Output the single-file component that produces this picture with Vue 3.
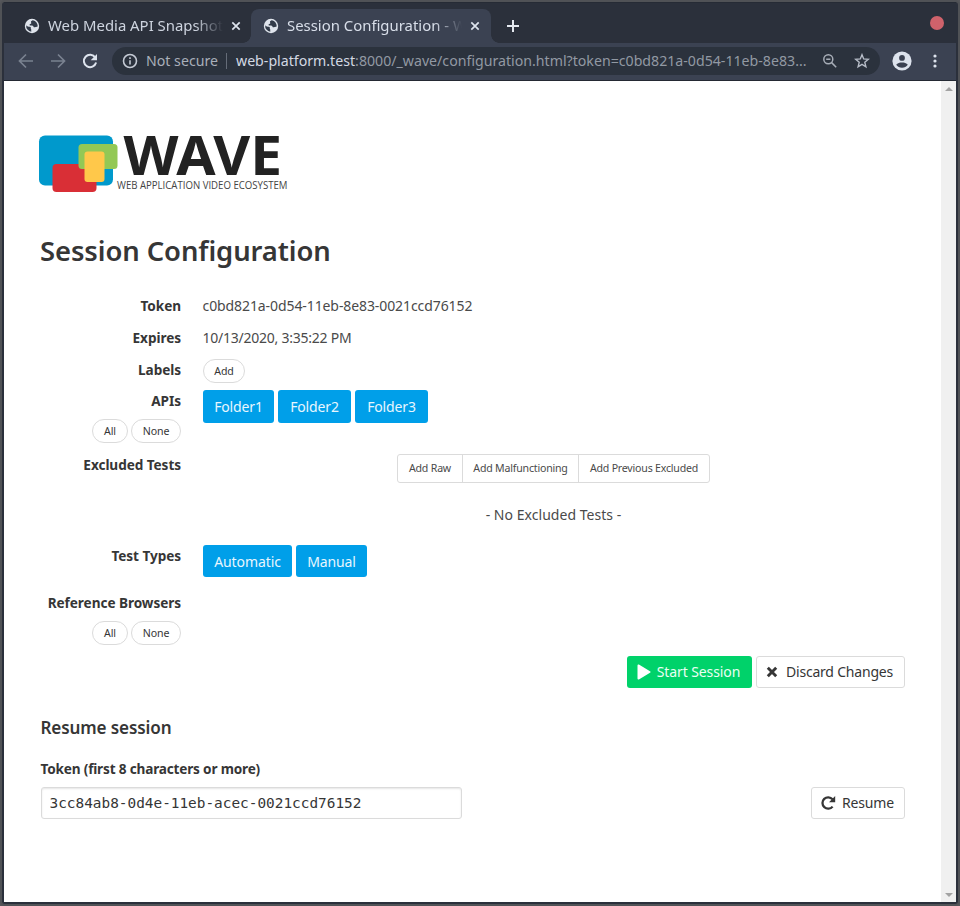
<script setup>
import { ref } from 'vue'

const tabs = [
  { title: 'Web Media API Snapshot', active: false },
  { title: 'Session Configuration - WAVE', active: true }
]
const folders = ['Folder1', 'Folder2', 'Folder3']
const excludeActions = ['Add Raw', 'Add Malfunctioning', 'Add Previous Excluded']
const testTypes = ['Automatic', 'Manual']
const resumeToken = ref('3cc84ab8-0d4e-11eb-acec-0021ccd76152')
</script>

<template>
  <div class="window">
    <header class="tabbar">
      <div v-for="tab in tabs" :key="tab.title" class="tab" :class="{ active: tab.active }">
        <svg class="globe" viewBox="0 0 16 16">
          <circle cx="8" cy="8" r="7.2" fill="#dfe4ec" />
          <path d="M8.9 2.2c-.9.6-1.9.7-2 1.5-.1.8.6.9.4 1.6-.3.9-1.6.6-1.8 1.5-.1.5.4.8.9.8 1.3-.1 2.6-.2 3 .9.2.7.8.9 1.4.8.9-.1 1.5-.7 2.7-.5A5.9 5.9 0 0 0 8.9 2.2zM2.2 7.2c.9 1 2.4 1.5 3.7 1.6.9.1 1.1.7.9 1.4-.2.7.6.9.5 1.7-.1.6-.2 1.2.1 1.9A5.9 5.9 0 0 1 2.2 7.2z" fill="#323b49" />
        </svg>
        <span class="tab-title">{{ tab.title }}</span>
        <svg class="tab-close" viewBox="0 0 10 10"><path d="M1.3 1.3 8.7 8.7M8.7 1.3 1.3 8.7" /></svg>
      </div>
      <svg class="plus" viewBox="0 0 12 12"><path d="M6 0v12M0 6h12" /></svg>
      <span class="close-dot"></span>
    </header>

    <nav class="toolbar">
      <svg class="nav dim" viewBox="0 0 16 16"><path d="M15 8H2M8 1.5 1.5 8 8 14.5" /></svg>
      <svg class="nav dim" viewBox="0 0 16 16"><path d="M1 8h13M8 1.5 14.5 8 8 14.5" /></svg>
      <svg class="nav reload" viewBox="0 0 16 16">
        <path d="M13.3 4.6A6.2 6.2 0 1 0 14.1 9.6" /><path class="solid" d="M15 1v6.3H8.7z" />
      </svg>
      <div class="omnibox">
        <svg class="info" viewBox="0 0 16 16">
          <circle cx="8" cy="8" r="6.5" /><path d="M8 7.2v4.3M8 4.3v1.8" />
        </svg>
        <span class="insecure">Not secure</span>
        <span class="divider"></span>
        <span class="url"><b>web-platform.test</b>:8000/_wave/configuration.html?token=c0bd821a-0d54-11eb-8e83...</span>
        <svg class="lens" viewBox="0 0 14 14"><circle cx="5.3" cy="5.3" r="4.5" /><path d="M8.6 8.6 13.2 13.2M3.2 5.3h4.2" /></svg>
        <svg class="star" viewBox="0 0 16 16"><path d="M8 1.7 9.7 5.9 14.3 6.3 10.8 9.3 11.9 13.8 8 11.4 4.1 13.8 5.2 9.3 1.7 6.3 6.3 5.9z" /></svg>
      </div>
      <svg class="avatar" viewBox="0 0 20 20">
        <circle cx="10" cy="10" r="9.6" fill="#dde3ed" />
        <circle cx="10" cy="6.9" r="2.9" fill="#3b4252" />
        <path d="M4.2 13.7c1.2-1.7 3.6-2.3 5.8-2.3s4.6.6 5.8 2.3c-1.3 1.9-3.4 3-5.8 3s-4.5-1.1-5.8-3z" fill="#3b4252" />
      </svg>
      <svg class="kebab" viewBox="0 0 4 14"><circle cx="2" cy="2" r="1.6" /><circle cx="2" cy="7" r="1.6" /><circle cx="2" cy="12" r="1.6" /></svg>
    </nav>

    <div class="viewport">
      <main class="page">
        <svg class="logo" viewBox="0 0 252 62">
          <rect x="0" y="1.5" width="74" height="50" rx="6" fill="#0099cc" />
          <rect x="13.5" y="30" width="44" height="28" rx="4" fill="#d92f36" />
          <rect x="39.5" y="10" width="39" height="25" rx="3.5" fill="#93c855" />
          <rect x="45.5" y="17.5" width="20" height="30.5" rx="3" fill="#ffc84a" />
          <text class="brand" x="84.5" y="40.5" textLength="158.5" lengthAdjust="spacingAndGlyphs">WAVE</text>
          <text class="tagline" x="78" y="54.7" textLength="170.5" lengthAdjust="spacingAndGlyphs">WEB APPLICATION VIDEO ECOSYSTEM</text>
        </svg>

        <h1>Session Configuration</h1>

        <section class="fields">
          <div class="row">
            <div class="label">Token</div>
            <div class="value token">c0bd821a-0d54-11eb-8e83-0021ccd76152</div>
          </div>
          <div class="row">
            <div class="label">Expires</div>
            <div class="value date">10/13/2020, 3:35:22 PM</div>
          </div>
          <div class="row">
            <div class="label">Labels</div>
            <div class="value buttons"><button class="pill add">Add</button></div>
          </div>
          <div class="row apis">
            <div class="label">APIs
              <div class="pills"><button class="pill all">All</button><button class="pill none">None</button></div>
            </div>
            <div class="value buttons">
              <button v-for="f in folders" :key="f" class="btn blue folder">{{ f }}</button>
            </div>
          </div>
          <div class="row excluded">
            <div class="label">Excluded Tests</div>
            <div class="value center">
              <div class="group"><button v-for="a in excludeActions" :key="a">{{ a }}</button></div>
              <p>- No Excluded Tests -</p>
            </div>
          </div>
          <div class="row types">
            <div class="label">Test Types</div>
            <div class="value buttons">
              <button v-for="t in testTypes" :key="t" class="btn blue" :class="t.toLowerCase()">{{ t }}</button>
            </div>
          </div>
          <div class="row browsers">
            <div class="label">Reference Browsers
              <div class="pills"><button class="pill all">All</button><button class="pill none">None</button></div>
            </div>
          </div>
        </section>

        <div class="actions">
          <button class="btn green">
            <svg class="play" viewBox="0 0 14 16"><path d="M.5 1.4C.5.5 1.2.2 1.9.6L13 7.2c.7.4.7 1.2 0 1.6L1.9 15.4c-.7.4-1.4.1-1.4-.8z" /></svg>Start Session
          </button>
          <button class="btn plain discard">
            <svg class="cross" viewBox="0 0 12 12"><path d="M1.8 1.8 10.2 10.2M10.2 1.8 1.8 10.2" /></svg>Discard Changes
          </button>
        </div>

        <h2>Resume session</h2>
        <label class="token-label" for="resume-token">Token (first 8 characters or more)</label>
        <div class="resume">
          <input id="resume-token" v-model="resumeToken" type="text" spellcheck="false" />
          <button class="btn plain again">
            <svg class="redo" viewBox="0 0 16 16"><path d="M12.5 4.3A5.7 5.7 0 1 0 12.6 11.6" /><path class="solid" d="M15.2 1v6.2H9z" /></svg>Resume
          </button>
        </div>
      </main>
      <aside class="scrollbar"><i class="up"></i><i class="down"></i></aside>
    </div>
  </div>
</template>

<style>
body { background: #55565a; }
</style>

<style scoped>
* { box-sizing: border-box; }
.window {
  width: 960px; height: 906px; display: flex; flex-direction: column;
  border: 2px solid #505256; border-radius: 5px; background: #2b303b;
  padding: 0 2px 2px; overflow: hidden; font-family: "Noto Sans", sans-serif;
}
svg { flex: none; display: block; }
button { font-family: inherit; margin: 0; white-space: nowrap; }

.tabbar { height: 41px; display: flex; align-items: flex-end; padding: 0 12px 0 7px; flex: none; border-top: 1px solid #262b35; }
.tab { height: 34px; width: 240px; display: flex; align-items: center; padding: 0 11px 0 12px; color: #ced4df; font-size: 14.9px; position: relative; }
.tab:not(.active) { padding: 0 10px 0 13px; }
.tab.active { background: #3b4252; border-radius: 8px 8px 0 0; color: #d8dee9; }
.tab.active::before, .tab.active::after { content: ""; position: absolute; bottom: 0; width: 8px; height: 8px; }
.tab.active::before { left: -8px; background: radial-gradient(circle at 0 0, transparent 7.5px, #3b4252 8px); }
.tab.active::after { right: -8px; background: radial-gradient(circle at 100% 0, transparent 7.5px, #3b4252 8px); }
.globe { width: 16px; height: 16px; margin-right: 8px; }
.tab-title {
  flex: 1; white-space: nowrap; overflow: hidden; line-height: 22px; margin-right: 8px; padding-bottom: 2px;
  -webkit-mask-image: linear-gradient(90deg, #000 calc(100% - 28px), transparent); mask-image: linear-gradient(90deg, #000 calc(100% - 28px), transparent);
}
.tab-close { width: 10px; height: 10px; fill: none; stroke: #dde3ed; stroke-width: 1.7; }
.plus { width: 12px; height: 12px; margin: 0 auto 11px 16px; stroke: #e5e9f0; stroke-width: 2; }
.close-dot { width: 14px; height: 14px; border-radius: 50%; background: #cf626b; margin-bottom: 13px; }

.toolbar { height: 38px; flex: none; background: #3b4252; border-bottom: 1px solid #242933; display: flex; align-items: center; padding: 0 19.5px 1px 14px; }
.nav { width: 16px; height: 16px; margin-right: 16px; fill: none; stroke: #dde3ed; stroke-width: 2; }
.nav.dim { stroke: #7a8290; stroke-width: 1.7; }
.nav.reload { margin-right: 14px; }
.solid { fill: currentColor; stroke: none; }
.reload { color: #dde3ed; }
.omnibox { width: 768px; height: 28px; border-radius: 14px; background: #2b323d; display: flex; align-items: center; padding: 0 10px; font-size: 14.17px; }
.info { width: 16px; height: 16px; fill: none; stroke: #c4cad4; stroke-width: 1.6; margin-right: 8px; }
.insecure, .url { padding-bottom: 2px; }
.insecure { color: #a9afb9; width: 80px; flex: none; white-space: nowrap; }
.divider { width: 1px; height: 16px; background: #656c78; margin-right: 9px; }
.url { color: #9299a3; white-space: nowrap; flex: 1; }
.url b { font-weight: 400; color: #d3d9e3; }
.lens { width: 14px; height: 14px; fill: none; stroke: #a7adb7; stroke-width: 1.5; margin-right: 17px; }
.star { width: 16px; height: 16px; fill: none; stroke: #b6bcc7; stroke-width: 1.4; stroke-linejoin: miter; }
.avatar { width: 20px; height: 20px; margin: 0 auto 0 12px; }
.kebab { width: 4px; height: 14px; fill: #dde3ed; }

.viewport { flex: 1; display: flex; background: #fff; min-height: 0; }
.page { flex: 1; padding: 53px 36px 0 37px; color: #363636; }
.scrollbar { width: 15px; background: #f0f0f0; display: flex; flex-direction: column; justify-content: space-between; align-items: center; padding: 6px 0 5px; }
.up, .down { width: 0; height: 0; border: 4px solid transparent; }
.up { border-top: 0; border-bottom-color: #a3a3a3; }
.down { border-bottom: 0; border-top-color: #a3a3a3; }

.logo { width: 252px; height: 62px; margin-left: -2px; overflow: visible; }
.brand { font: 700 54px "Noto Sans", sans-serif; fill: #222; }
.tagline { font: 400 10px "Open Sans", sans-serif; fill: #444; }

h1 { margin: 35px 0 0 -1px; font-size: 27.4px; line-height: 40px; font-weight: 600; letter-spacing: -.08px; }
.fields { margin-top: 19px; font-size: 14px; }
.row { display: grid; grid-template-columns: 140px 1fr; column-gap: 22px; height: 32px; line-height: 32px; }
.label { text-align: right; font-weight: 700; font-size: 13.6px; letter-spacing: -.06px; white-space: nowrap; display: flex; flex-direction: column; }
.value { color: #4a4a4a; }
.token { letter-spacing: -.09px; margin-left: -.5px; }
.date { letter-spacing: -.24px; margin-left: -.5px; }
.buttons { display: flex; gap: 4px; align-items: flex-start; padding-top: 5px; }
.pills { display: flex; justify-content: flex-end; gap: 3px; margin-top: 2px; }
.pill { height: 24px; border: 1px solid #dbdbdb; border-radius: 12px; background: #fff; color: #363636; font-size: 10.6px; letter-spacing: -.1px; padding: 0; }
.add { width: 42px; }
.all { width: 36px; }
.none { width: 50px; }
.row.apis { height: 63px; line-height: 30px; }
.apis .pills { margin-top: 3px; }
.apis .buttons { padding-top: 4px; }
.btn { height: 32px; border: 0; border-radius: 3px; font-size: 14px; padding: 0; display: flex; align-items: center; justify-content: center; letter-spacing: -.1px; }
.blue { background: #009fe9; color: #e8f6fe; }
.folder { width: 73px; height: 33px; letter-spacing: -.15px; }
.folder:first-child { width: 71px; }
.automatic { width: 89px; }
.manual { width: 71px; }
.excluded.row { height: 91px; }
.center { display: flex; flex-direction: column; align-items: center; padding: 5px 1px 0 0; }
.group { display: flex; height: 29px; border: 1px solid #dbdbdb; border-radius: 3px; }
.group button { background: none; border: 0; border-left: 1px solid #dbdbdb; color: #4a4a4a; font-size: 10.6px; letter-spacing: -.2px; padding: 0 0 2px; width: 116px; }
.group button:first-child { border-left: 0; width: 64px; }
.group button:last-child { width: 131px; }
.center p { margin: 16px 0 0; letter-spacing: .04px; }
.types.row { height: 47px; }
.browsers.row { height: 69px; }

.actions { display: flex; justify-content: flex-end; gap: 4px; }
.green { width: 125px; background: #00d26a; color: #eafff3; }
.actions .btn, .again { padding: 0 2px 1px 0; }
.play { width: 14px; height: 16px; fill: #fff; margin-right: 6px; }
.plain { border: 1px solid #dbdbdb; background: #fff; color: #363636; }
.discard { width: 149px; letter-spacing: -.2px; }
.cross { width: 12px; height: 12px; stroke: #363636; stroke-width: 2.9; margin-right: 8px; }
h2 { margin: 26px 0 0 -.5px; font-size: 17.1px; line-height: 28px; font-weight: 600; letter-spacing: -.13px; }
.token-label { display: block; margin: 17px 0 0 -.5px; line-height: 20px; font-size: 13.6px; font-weight: 700; letter-spacing: -.18px; }
.resume { display: flex; justify-content: space-between; margin-top: 8px; }
input { width: 421px; height: 32px; border: 1px solid #dbdbdb; border-radius: 3px; box-shadow: inset 0 1px 2px rgba(10, 10, 10, .1); font: 14.4px "DejaVu Sans Mono", monospace; color: #363636; padding: 0 7.5px; outline: 0; }
.again { width: 94px; letter-spacing: -.16px; }
.redo { width: 16px; height: 16px; fill: none; stroke: #363636; stroke-width: 2.3; color: #363636; margin-right: 6px; }
</style>
